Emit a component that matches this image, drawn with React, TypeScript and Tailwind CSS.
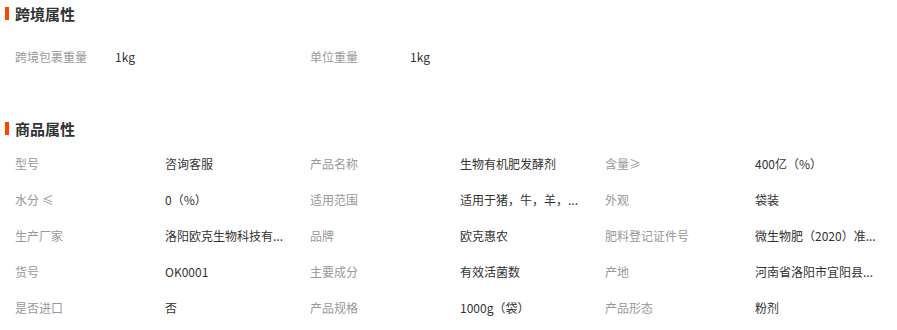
const crossBorder = [
  { label: "跨境包裹重量", value: "1kg" },
  { label: "单位重量", value: "1kg" },
]

// values are shown cut short, as the page itself displays them
const attrs = [
  ["型号", "咨询客服"],
  ["产品名称", "生物有机肥发酵剂"],
  ["含量≥", "400亿（%）"],
  ["水分 ≤", "0（%）"],
  ["适用范围", "适用于猪，牛，羊，..."],
  ["外观", "袋装"],
  ["生产厂家", "洛阳欧克生物科技有..."],
  ["品牌", "欧克惠农"],
  ["肥料登记证件号", "微生物肥（2020）准..."],
  ["货号", "OK0001"],
  ["主要成分", "有效活菌数"],
  ["产地", "河南省洛阳市宜阳县..."],
  ["是否进口", "否"],
  ["产品规格", "1000g（袋）"],
  ["产品形态", "粉剂"],
]

function SectionTitle({ title }: { title: string }) {
  return (
    <div className="flex h-7 items-center pb-0.5">
      <span className="ml-[5px] mr-[6px] h-[13px] w-1 bg-[#ff4400]" />
      <h2 className="text-[15px] font-bold leading-none text-[#333]">{title}</h2>
    </div>
  )
}

export default function App() {
  return (
    <div
      className="h-[330px] w-[897px] overflow-hidden bg-white text-xs"
      style={{ fontFamily: '"Microsoft YaHei", "Noto Sans CJK SC", sans-serif' }}
    >
      <SectionTitle title="跨境属性" />
      <div className="mt-[11px] flex h-9 items-center pl-[15px]">
        {crossBorder.map((item) => (
          <div key={item.label} className="flex w-[295px] items-center">
            <span className="w-[100px] text-[#999]">{item.label}</span>
            <span className="text-[#333]">{item.value}</span>
          </div>
        ))}
      </div>

      <div className="mt-10">
        <SectionTitle title="商品属性" />
      </div>
      <div className="mt-[3px] grid grid-cols-[295px_295px_1fr] pl-[15px]">
        {attrs.map(([label, value]) => (
          <div key={label} className="flex h-9 items-center">
            <span className="w-[150px] shrink-0 text-[#999]">{label}</span>
            <span className="whitespace-nowrap text-[#333]">{value}</span>
          </div>
        ))}
      </div>
    </div>
  )
}
